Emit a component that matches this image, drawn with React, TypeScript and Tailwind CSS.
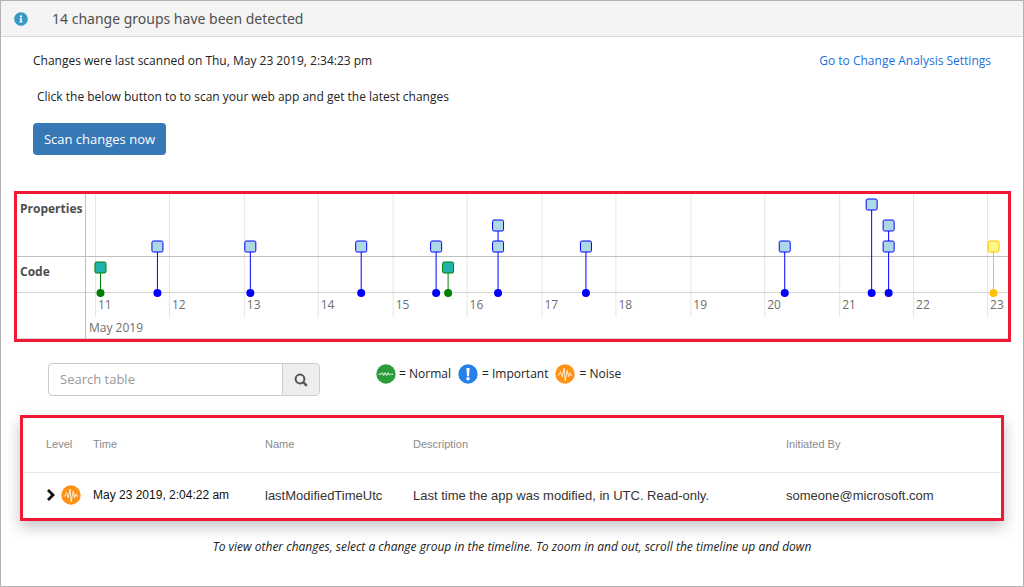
import React from "react";
import { FaInfoCircle } from "react-icons/fa";

const CHART_WIDTH = 923;
const pct = (x: number) => `${(x / CHART_WIDTH) * 100}%`;

const palette = {
  blue: { stroke: "#0000ff", fill: "#add8e6", line: "#0000ff" },
  green: { stroke: "#008000", fill: "#20b2aa", line: "#008000" },
  yellow: { stroke: "#ffc200", fill: "#fff785", line: "#ffc200" },
};

type Event = { x: number; levels: number[]; color: keyof typeof palette };

const events: Event[] = [
  { x: 14, levels: [73], color: "green" },
  { x: 71, levels: [52], color: "blue" },
  { x: 164, levels: [52], color: "blue" },
  { x: 275, levels: [52], color: "blue" },
  { x: 350, levels: [52], color: "blue" },
  { x: 362, levels: [73], color: "green" },
  { x: 412, levels: [31, 52], color: "blue" },
  { x: 500, levels: [52], color: "blue" },
  { x: 699, levels: [52], color: "blue" },
  { x: 786, levels: [10], color: "blue" },
  { x: 803, levels: [31, 52], color: "blue" },
  { x: 908, levels: [52], color: "yellow" },
];

const days = Array.from({ length: 13 }, (_, i) => ({ label: 11 + i, x: Math.round(9 + i * 74.45) }));

function Timeline() {
  return (
    <section aria-label="Timeline" className="mr-3 ml-[13px] mt-9 flex border-3 border-[#f01834] text-xs text-[#4d4d4d]">
      <div className="flex w-[69px] shrink-0 flex-col border-r border-[#bfbfbf] font-bold">
        <div className="h-[63px] border-b border-[#bfbfbf] pt-[7px] pl-[3px] leading-4">Properties</div>
        <div className="h-9 border-b border-[#d4d4d4] pt-[7px] pl-[3px] leading-4">Code</div>
        <div className="flex-1 border-b border-[#d4d4d4]" />
      </div>
      <svg className="h-[145px] min-w-0 flex-1" role="img" aria-label="Changes per day, May 2019">
        {days.map((d) => (
          <g key={d.label}>
            <line x1={pct(d.x + 0.5)} x2={pct(d.x + 0.5)} y1="0" y2="123" stroke="#e5e5e5" />
            <text x={pct(d.x + 3)} y="115" fill="#6e6e6e">{d.label}</text>
          </g>
        ))}
        <line x1="0" x2="100%" y1="62.5" y2="62.5" stroke="#bfbfbf" />
        <line x1="0" x2="100%" y1="98.5" y2="98.5" stroke="#d4d4d4" />
        <line x1="0" x2="100%" y1="144.5" y2="144.5" stroke="#d4d4d4" />
        <text x="3" y="138" fill="#6e6e6e">May 2019</text>
        {events.map((e) => {
          const c = palette[e.color];
          return (
            <svg key={e.x} x={pct(e.x)} y="0" overflow="visible">
              <line x1="0.5" x2="0.5" y1={e.levels[0]} y2="99" stroke={c.line} />
              <circle cx="0.5" cy="99" r="4" fill={c.stroke} />
              {e.levels.map((y) => (
                <rect key={y} x="-5" y={y - 5} width="11" height="11" rx="1.5" fill={c.fill} stroke={c.stroke} />
              ))}
            </svg>
          );
        })}
      </svg>
    </section>
  );
}

const NormalIcon = () => (
  <svg viewBox="0 0 20 20" className="size-5 shrink-0" aria-hidden="true">
    <circle cx="10" cy="10" r="9.7" fill="#2a9d3a" />
    <path d="M2.5 10.2h2.6l1.2-1.5 1.4 2.8 1.5-2.8 1.4 2.8 1.5-2.8 1.3 2.4 1-0.9h2.8" fill="none" stroke="#fff" strokeWidth="0.9" strokeLinejoin="round" />
  </svg>
);

const ImportantIcon = () => (
  <svg viewBox="0 0 20 20" className="size-5 shrink-0" aria-hidden="true">
    <circle cx="10" cy="10" r="9.7" fill="#2680eb" />
    <path d="M8.4 4h3.2l-.6 8.2H9z" fill="#fff" />
    <circle cx="10" cy="14.8" r="1.7" fill="#fff" />
  </svg>
);

const NoiseIcon = () => (
  <svg viewBox="0 0 20 20" className="size-5 shrink-0" aria-hidden="true">
    <circle cx="10" cy="10" r="9.7" fill="#ff9214" />
    <path d="M2.8 11h1.3l1.4-3.4 1.7 5.2 1.9-8.6 1.1 12.6 2-10.4 1.4 6.4 1.3-4 1 2.4h1.2" fill="none" stroke="#fff" strokeWidth="0.8" strokeLinejoin="round" />
  </svg>
);

export default function App() {
  return (
    <main className="flex min-h-screen flex-col border border-[#b3b3b3] bg-white font-['Open_Sans','Noto_Sans',sans-serif] text-xs text-[#222]">
      <header className="flex h-9 items-center border-b border-[#d9d9d9] bg-[#f4f4f4] pl-[13px]">
        <FaInfoCircle className="size-3.5 text-[#3999c6]" aria-hidden="true" />
        <h1 className="ml-6 font-['Noto_Sans',sans-serif] text-sm text-[#505050]">14 change groups have been detected</h1>
      </header>

      <div className="flex justify-between pt-[15px] pr-8 pl-8 leading-[18px]">
        <p>Changes were last scanned on Thu, May 23 2019, 2:34:23 pm</p>
        <a href="#settings" className="text-[#1a6fe0]">Go to Change Analysis Settings</a>
      </div>
      <p className="mt-[18px] pl-9 leading-[18px]">Click the below button to to scan your web app and get the latest changes</p>
      <div className="mt-[17px] pl-8">
        <button type="button" className="h-8 w-[133px] rounded bg-[#3778b7] pt-0.5 text-[13px] text-white">Scan changes now</button>
      </div>

      <Timeline />

      <div className="mt-[21px] flex items-start pl-[47px]">
        <form className="flex h-[33px] w-[272px] rounded border border-[#ccc]" onSubmit={(e) => e.preventDefault()}>
          <input type="text" aria-label="Search table" placeholder="Search table" className="min-w-0 flex-1 rounded-l px-[11px] text-[13px] outline-none placeholder:text-[#999]" />
          <button type="submit" aria-label="Search" className="flex w-[37px] items-center justify-center rounded-r border-l border-[#ccc] bg-[#eee]">
            <svg viewBox="0 0 14 14" className="size-3.5" fill="none" stroke="#555" strokeWidth="2" aria-hidden="true">
              <circle cx="6" cy="6" r="4.4" />
              <path d="M9.2 9.2l3.6 3.6" strokeWidth="2.4" />
            </svg>
          </button>
        </form>
        <ul className="ml-14 flex items-center gap-[7px] pt-px leading-[18px]">
          <li className="flex items-center gap-[3px]"><NormalIcon />= Normal</li>
          <li className="flex items-center gap-1"><ImportantIcon />= Important</li>
          <li className="flex items-center gap-1"><NoiseIcon />= Noise</li>
        </ul>
      </div>

      <div className="mx-[19px] mt-[19px] border-3 border-[#f01834] shadow-[0_6px_14px_rgba(0,0,0,0.24)]">
        <table className="w-full table-fixed text-left font-['Liberation_Sans',Arial,sans-serif] text-[13px]">
          <colgroup>
            <col className="w-[70px]" />
            <col className="w-[172px]" />
            <col className="w-[148px]" />
            <col className="w-[373px]" />
            <col />
          </colgroup>
          <thead>
            <tr className="h-[54px] border-b border-[#e8e8e8] text-[11px] text-[#8a8a8a]">
              <th className="pl-[23px] font-normal">Level</th>
              <th className="font-normal">Time</th>
              <th className="font-normal">Name</th>
              <th className="font-normal">Description</th>
              <th className="font-normal">Initiated By</th>
            </tr>
          </thead>
          <tbody>
            <tr className="h-[46px]">
              <td className="pl-[23px]">
                <div className="flex items-center gap-[5px]">
                  <button type="button" aria-label="Expand row">
                    <svg viewBox="0 0 10 12" className="h-3 w-2.5" fill="none" stroke="#111" strokeWidth="2.8" aria-hidden="true">
                      <path d="M2 1l5 5-5 5" />
                    </svg>
                  </button>
                  <NoiseIcon />
                </div>
              </td>
              <td className="text-xs text-[#111]">May 23 2019, 2:04:22 am</td>
              <td className="text-[#333]">lastModifiedTimeUtc</td>
              <td className="text-[#333]">Last time the app was modified, in UTC. Read-only.</td>
              <td className="text-[#333]">someone@microsoft.com</td>
            </tr>
          </tbody>
        </table>
      </div>

      <p className="mt-[17px] text-center italic leading-[18px]">
        To view other changes, select a change group in the timeline. To zoom in and out, scroll the timeline up and down
      </p>
    </main>
  );
}
